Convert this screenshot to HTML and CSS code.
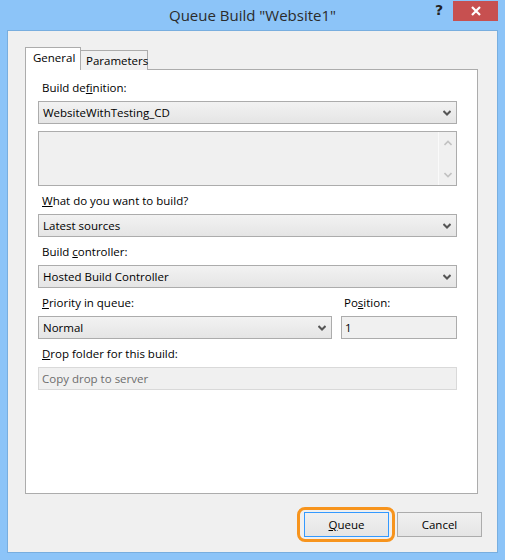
FILE: index.html
```html
<!DOCTYPE html>
<html>
<head>
<meta charset="utf-8">
<link rel="stylesheet" href="styles.css">
</head>
<body>
<div class="window">
  <div class="titlebar">
    <div class="title">Queue Build "Website1"</div>
    <div class="help">?</div>
    <div class="close">
      <svg width="12" height="12" viewBox="0 0 12 12"><path d="M2 2 L10 10 M10 2 L2 10" stroke="#fff" stroke-width="2.2" fill="none"/></svg>
    </div>
  </div>
  <div class="client">
    <div class="tabs">
      <div class="tab active">General</div>
      <div class="tab">Parameters</div>
    </div>
    <div class="panel">
      <div class="label">Build de<u>f</u>inition:</div>
      <div class="select">
        <span>WebsiteWithTesting_CD</span>
        <svg class="chev" width="8" height="6" viewBox="0 0 8 6"><path d="M0.5 1 L4 4.5 L7.5 1" stroke="#555" stroke-width="2" fill="none"/></svg>
      </div>
      <div class="textarea">
        <div class="scroll">
          <svg width="8" height="6" viewBox="0 0 8 6"><path d="M0.5 5 L4 1.5 L7.5 5" stroke="#c2c2c2" stroke-width="1.6" fill="none"/></svg>
          <svg width="8" height="6" viewBox="0 0 8 6"><path d="M0.5 1 L4 4.5 L7.5 1" stroke="#c2c2c2" stroke-width="1.6" fill="none"/></svg>
        </div>
      </div>
      <div class="label gap"><u>W</u>hat do you want to build?</div>
      <div class="select">
        <span>Latest sources</span>
        <svg class="chev" width="8" height="6" viewBox="0 0 8 6"><path d="M0.5 1 L4 4.5 L7.5 1" stroke="#555" stroke-width="2" fill="none"/></svg>
      </div>
      <div class="label gap">Build <u>c</u>ontroller:</div>
      <div class="select">
        <span>Hosted Build Controller</span>
        <svg class="chev" width="8" height="6" viewBox="0 0 8 6"><path d="M0.5 1 L4 4.5 L7.5 1" stroke="#555" stroke-width="2" fill="none"/></svg>
      </div>
      <div class="row gap">
        <div class="col">
          <div class="label"><u>P</u>riority in queue:</div>
          <div class="select">
            <span>Normal</span>
            <svg class="chev" width="8" height="6" viewBox="0 0 8 6"><path d="M0.5 1 L4 4.5 L7.5 1" stroke="#555" stroke-width="2" fill="none"/></svg>
          </div>
        </div>
        <div class="col">
          <div class="label pos">Po<u>s</u>ition:</div>
          <div class="input">1</div>
        </div>
      </div>
      <div class="label gap"><u>D</u>rop folder for this build:</div>
      <div class="input disabled">Copy drop to server</div>
    </div>
    <div class="buttons">
      <div class="btn primary"><u>Q</u>ueue</div>
      <div class="btn">Cancel</div>
    </div>
  </div>
</div>
</body>
</html>
```

FILE: styles.css
```css
* { box-sizing: border-box; }
html, body { margin: 0; padding: 0; }
body {
  width: 505px;
  height: 560px;
  background: #8cc4f8;
  font-family: "Open Sans", "Noto Sans", sans-serif;
  font-size: 11.5px;
  color: #000;
  overflow: hidden;
}
u { text-decoration: underline; text-underline-offset: 1px; }
.window {
  display: flex;
  flex-direction: column;
  width: 505px;
  height: 560px;
}
.titlebar {
  position: relative;
  height: 30px;
  display: flex;
  align-items: flex-start;
}
.title {
  flex: 1;
  text-align: center;
  font-size: 15px;
  color: #2b2b2b;
  padding-top: 5px;
  padding-left: 0;
}
.help {
  position: absolute;
  left: 435px;
  top: 2px;
  font-weight: bold;
  font-size: 14px;
  color: #222;
  font-family: "DejaVu Sans", sans-serif;
}
.close {
  position: absolute;
  left: 453px;
  top: 1px;
  width: 45px;
  height: 20px;
  background: #c75050;
  display: flex;
  align-items: center;
  justify-content: center;
}
.client {
  flex: 1;
  margin: 0 7px 7px 7px;
  border: 1px solid #78aedf;
  background: #f0f0f0;
  padding: 17px 19px 15px 17px;
  display: flex;
  flex-direction: column;
}
.tabs {
  display: flex;
  align-items: flex-end;
  height: 22px;
  position: relative;
  z-index: 1;
  margin-bottom: -1px;
}
.tab {
  height: 20px;
  border: 1px solid #acacac;
  border-bottom: none;
  background: #f0f0f0;
  padding: 0 5px;
  line-height: 19px;
  color: #000;
  width: 68px;
  margin-left: -1px;
}
.tab.active {
  height: 23px;
  background: #fff;
  width: 56px;
  margin-left: 0;
  padding-left: 7px;
  line-height: 20px;
  margin-right: 0;
  position: relative;
  z-index: 2;
}
.tab.active + .tab { margin-left: -1px; padding-left: 5px; }
.panel {
  flex: 1;
  background: #fff;
  border: 1px solid #acacac;
  padding: 10px 20px 0 12px;
}
.label {
  height: 16px;
  line-height: 16px;
  padding-left: 4px;
  margin-bottom: 5px;
  white-space: nowrap;
}
.label.gap, .row.gap { margin-top: 7px; }
.label.pos { padding-left: 3px; }
.select {
  height: 23px;
  border: 1px solid #acacac;
  background: linear-gradient(#f2f2f2, #e5e5e5);
  display: flex;
  align-items: center;
  justify-content: space-between;
  padding: 0 5px 0 4px;
}
.select span { line-height: 21px; }
.textarea {
  margin-top: 7px;
  height: 55px;
  border: 1px solid #acacac;
  background: #f0f0f0;
  display: flex;
  justify-content: flex-end;
}
.scroll {
  width: 18px;
  border-left: 1px solid #fafafa;
  display: flex;
  flex-direction: column;
  align-items: center;
  justify-content: space-between;
  padding: 8px 0 7px 0;
}
.row {
  display: grid;
  grid-template-columns: 294px 116px;
  column-gap: 9px;
}
.row .label.gap { margin-top: 0; }
.input {
  height: 23px;
  border: 1px solid #acacac;
  background: #f0f0f0;
  padding: 0 3px;
  line-height: 21px;
}
.input.disabled {
  border-color: #d9d9d9;
  color: #6d6d6d;
}
.buttons {
  display: flex;
  justify-content: flex-end;
  gap: 8px;
  margin-top: 18px;
  padding-right: -4px;
  margin-right: -4px;
}
.btn {
  width: 85px;
  height: 25px;
  border: 1px solid #acacac;
  background: linear-gradient(#f0f0f0, #e5e5e5);
  text-align: center;
  line-height: 23px;
}
.btn.primary {
  border-color: #3399ff;
  position: relative;
}
.btn.primary::after {
  content: "";
  position: absolute;
  left: -8px;
  right: -7px;
  top: -6px;
  bottom: -6px;
  border: 3px solid #f7941d;
  border-radius: 8px;
}
```
